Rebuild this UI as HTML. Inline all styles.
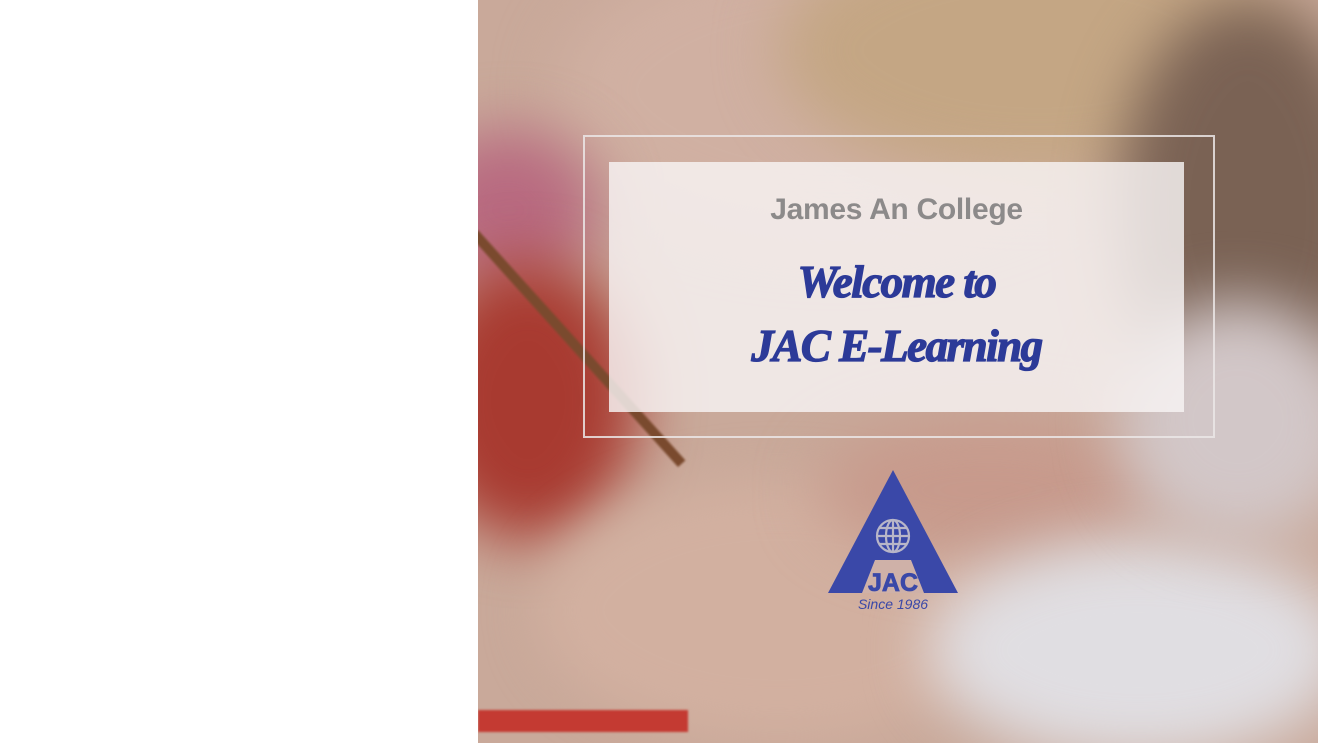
<!DOCTYPE html>
<html><head><meta charset="utf-8"><style>
html,body{margin:0;padding:0;width:1320px;height:743px;overflow:hidden;background:#fff;}
#photo{position:absolute;left:478px;top:0;width:840px;height:743px;overflow:hidden;background:#c9a99a;}
.b{position:absolute;border-radius:50%;filter:blur(30px);}
.frame{position:absolute;left:583px;top:135px;width:628px;height:299px;border:2px solid rgba(235,230,230,0.85);}
.card{position:absolute;left:609px;top:162px;width:575px;height:250px;background:rgba(248,244,244,0.82);}
.t1{position:absolute;left:609px;width:575px;top:193px;text-align:center;font:600 30px "Liberation Sans",sans-serif;color:#8c8a8a;letter-spacing:-0.3px;}
.t2{position:absolute;left:609px;width:575px;text-align:center;font:italic bold 45px "Liberation Serif","DejaVu Serif",serif;color:#2c3a98;letter-spacing:-1.5px;-webkit-text-stroke:1.3px #2c3a98;}
</style></head><body>
<div id="photo">
  <div class="b" style="left:80px;top:-60px;width:560px;height:300px;background:#d0b0a2;"></div>
  <div class="b" style="left:300px;top:-80px;width:520px;height:260px;background:#c4a684;"></div>
  <div class="b" style="left:640px;top:0;width:260px;height:420px;background:#7a6254;"></div>
  <div class="b" style="left:-60px;top:130px;width:180px;height:160px;background:#b86a80;"></div>
  <div class="b" style="left:-60px;top:260px;width:220px;height:280px;background:#a83a30;"></div>
  <div class="b" style="left:60px;top:480px;width:480px;height:260px;background:#d2b0a0;filter:blur(25px);"></div>
  <div class="b" style="left:340px;top:420px;width:340px;height:140px;background:#c79a8c;"></div>
  <div class="b" style="left:450px;top:540px;width:420px;height:220px;background:#e0dee2;"></div>
  <div class="b" style="left:640px;top:300px;width:240px;height:240px;background:#d2c7c8;"></div>
  <div style="position:absolute;left:0;top:230px;width:310px;height:10px;background:#7a4a2e;transform-origin:0 0;transform:rotate(48deg);filter:blur(1px);"></div>
  <div style="position:absolute;left:0;top:710px;width:210px;height:22px;background:#c43a32;filter:blur(1px);"></div>
</div>
<div class="frame"></div>
<div class="card"></div>
<div class="t1">James An College</div>
<div class="t2" style="top:256px;">Welcome to</div>
<div class="t2" style="top:320px;">JAC E-Learning</div>
<svg style="position:absolute;left:820px;top:460px;" width="150" height="160" viewBox="0 0 150 160">
  <polygon points="73,10 8,133 138,133" fill="#3a48a8"/>
  <polygon points="55,100 91,100 104,133 42,133" fill="#cfb1a8"/>
  <g fill="none" stroke="#b8b6c8" stroke-width="2.2">
    <circle cx="73" cy="76" r="16"/>
    <ellipse cx="73" cy="76" rx="7" ry="16"/>
    <line x1="73" y1="60" x2="73" y2="92"/>
    <line x1="57" y1="76" x2="89" y2="76"/>
    <line x1="59" y1="68" x2="87" y2="68"/>
    <line x1="59" y1="84" x2="87" y2="84"/>
  </g>
  <text x="73" y="131" text-anchor="middle" font-family="Liberation Sans,sans-serif" font-weight="bold" font-size="25" fill="#3a48a8" stroke="#3a48a8" stroke-width="0.8">JAC</text>
  <text x="73" y="149" text-anchor="middle" font-family="Liberation Sans,sans-serif" font-style="italic" font-size="14" fill="#3a48a8">Since 1986</text>
</svg>
</body></html>
